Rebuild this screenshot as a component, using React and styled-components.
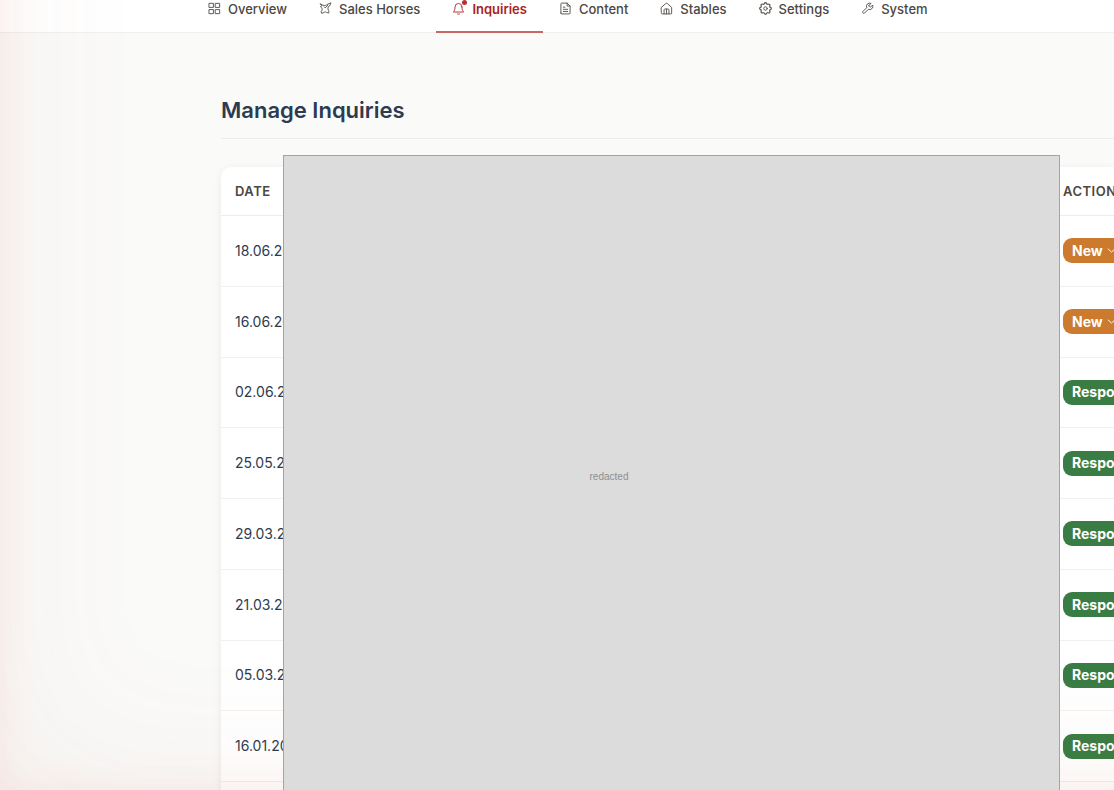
import React from "react";
import styled, { createGlobalStyle } from "styled-components";

const GlobalStyle = createGlobalStyle`
  *, *::before, *::after { box-sizing: border-box; }
  html, body { margin: 0; }
  body {
    background: #fafaf9;
    color: #2d3b4f;
    font-family: Inter, "Liberation Sans", sans-serif;
    overflow: hidden;
  }
`;

const Page = styled.div`
  position: relative;
  height: 100vh;
  overflow: hidden;
`;

const EdgeGlow = styled.div`
  position: absolute;
  inset: -240px -240px 0 0;
  z-index: 1;
  pointer-events: none;
  box-shadow:
    inset 0 0 160px rgba(170, 100, 70, 0.07),
    inset 0 0 40px rgba(235, 60, 40, 0.07);
`;

const TopNav = styled.nav`
  display: flex;
  height: 33px;
  padding-left: 192px;
  background: #fff;
  border-bottom: 1px solid #f2eeec;
`;

const NavLink = styled.a`
  display: flex;
  align-items: center;
  gap: 7px;
  height: 33px;
  padding: 0 16px 14px;
  border-bottom: 2px solid ${(p) => (p.$active ? "#c96762" : "transparent")};
  color: ${(p) => (p.$active ? "#a82222" : "#4b4741")};
  font-size: 13px;
  line-height: 18px;
  font-weight: ${(p) => (p.$active ? 600 : 500)};
  white-space: nowrap;
  text-decoration: none;
`;

const IconSlot = styled.span`
  position: relative;
  display: flex;
  flex: none;
  opacity: 0.9;
`;

const AlertDot = styled.span`
  position: absolute;
  top: -2px;
  right: -2px;
  width: 5px;
  height: 5px;
  border-radius: 50%;
  background: #b01c1c;
`;

const Main = styled.main`
  padding: 61px 0 0 221px;
`;

const Title = styled.h1`
  margin: 0 0 28px;
  padding-bottom: 12px;
  border-bottom: 1px solid #eeedeb;
  font-size: 22px;
  line-height: 32px;
  font-weight: 600;
`;

const Panel = styled.section`
  position: relative;
  padding-bottom: 40px;
  background: #fff;
  border-radius: 10px 0 0 0;
  box-shadow: 0 2px 8px rgba(40, 30, 20, 0.07);
`;

const Table = styled.table`
  width: 100%;
  height: 615px;
  table-layout: fixed;
  border-collapse: separate;
  border-spacing: 0;
`;

const HeadCell = styled.th`
  width: ${(p) => p.$width || "auto"};
  height: 49px;
  padding: 0 0 0 14px;
  border-bottom: 1px solid #eeedeb;
  color: #4b4741;
  font-size: 13px;
  line-height: 18px;
  font-weight: 600;
  letter-spacing: 0.5px;
  text-align: left;
  white-space: nowrap;
`;

const Cell = styled.td`
  padding: 20px 0 20px 14px;
  border-bottom: 1px solid #f3f0ee;
  font-size: 14px;
  line-height: 20px;
  white-space: nowrap;
`;

const StatusPill = styled.label`
  display: inline-flex;
  align-items: center;
  gap: 4px;
  height: 25px;
  padding: 0 9px;
  border-radius: 9px;
  background: ${(p) => (p.$status === "New" ? "#cc7a2d" : "#3a7d44")};
  color: #fff;
  vertical-align: middle;
`;

const StatusSelect = styled.select`
  appearance: none;
  field-sizing: content;
  margin: 0;
  padding: 0;
  border: 0;
  background: transparent;
  color: inherit;
  font-family: inherit;
  font-size: 14px;
  line-height: 20px;
  font-weight: 700;
`;

const Redaction = styled.div`
  position: absolute;
  top: -12px;
  bottom: 0;
  left: 62px;
  right: 54px;
  z-index: 2;
  padding: 314px 125px 0 0;
  border: 1px solid #a3a5a5;
  background: #dcdcdc;
  color: #8e8e8e;
  font-family: "Liberation Sans", Arial, sans-serif;
  font-size: 10px;
  line-height: 14px;
  text-align: center;
`;

const Svg = ({ size = 13, weight = 1.8, children }) => (
  <svg width={size} height={size} viewBox="0 0 24 24" fill="none" stroke="currentColor"
    strokeWidth={weight} strokeLinecap="round" strokeLinejoin="round" aria-hidden="true">
    {children}
  </svg>
);

const icons = {
  Overview: (
    <Svg><path d="M2.500 2.500h7.500v7.500H2.500zM14 2.500h7.500v7.500H14zM2.500 14h7.500v7.500H2.500zM14 14h7.500v7.500H14z" /></Svg>
  ),
  "Sales Horses": (
    <Svg><path d="M2.500 3.500l5 2.500c2 .8 4.500.6 6.500-.5l3-2 5-1.800-1.800 4.800-3.200 2.500c-1 3-.3 5.500 1.500 8l-.8 3.500-3.700-1.200c-1.800-1.400-3.200-1.400-5 0L5 21l-1-3.500c1.800-2 2.400-4 1.300-6.500L2.500 8.500l2.300-1.300zM9.500 9l1.800 1.800L16.500 6" /></Svg>
  ),
  Inquiries: (
    <Svg><path d="M18.300 9a6.300 6.300 0 0 0-12.600 0c0 6-2 8-3.200 9.500h19C20.300 17 18.300 15 18.300 9zM10 22c1 .9 3 .9 4 0" /></Svg>
  ),
  Content: (
    <Svg><path d="M3.500 20.500v-17A1.500 1.500 0 0 1 5 2h10l5.500 5.500v13A1.500 1.500 0 0 1 19 22H5a1.500 1.500 0 0 1-1.500-1.500zM15 2v5.500h5.500M8 9.500h3M8 13.500h8M8 17.500h8" /></Svg>
  ),
  Stables: (
    <Svg><path d="M2.500 10L10.500 2.800a2.200 2.200 0 0 1 3 0L21.500 10v10.500A1.500 1.500 0 0 1 20 22H4a1.500 1.500 0 0 1-1.500-1.500zM7.500 22v-7.500A1.500 1.500 0 0 1 9 13h6a1.500 1.500 0 0 1 1.500 1.500V22M12 13v9" /></Svg>
  ),
  Settings: (
    <Svg><path d="M10.300 4.300c.43-1.760 2.920-1.760 3.350 0a1.720 1.720 0 0 0 2.570 1.070c1.540-.94 3.310.82 2.370 2.370a1.720 1.720 0 0 0 1.070 2.570c1.760.43 1.760 2.920 0 3.350a1.720 1.720 0 0 0-1.070 2.570c.94 1.540-.82 3.310-2.370 2.370a1.720 1.720 0 0 0-2.570 1.070c-.43 1.760-2.920 1.760-3.350 0a1.720 1.720 0 0 0-2.570-1.070c-1.540.94-3.310-.82-2.370-2.370a1.720 1.720 0 0 0-1.070-2.570c-1.760-.43-1.760-2.920 0-3.350a1.720 1.720 0 0 0 1.070-2.570c-.94-1.540.82-3.310 2.370-2.370 1 .61 2.300.07 2.570-1.070z" transform="translate(-2.400 -2.400) scale(1.200)" /><circle cx="12" cy="12" r="3.200" /></Svg>
  ),
  System: (
    <Svg><path d="M14.700 6.300a1 1 0 0 0 0 1.400l1.600 1.600a1 1 0 0 0 1.400 0l3.770-3.770a6 6 0 0 1-7.940 7.940l-6.910 6.910a2.120 2.120 0 0 1-3-3l6.910-6.910a6 6 0 0 1 7.940-7.940l-3.760 3.760z" /></Svg>
  ),
};

const inquiries = [
  { date: "18.06.2025", status: "New" },
  { date: "16.06.2025", status: "New" },
  { date: "02.06.2025", status: "Responded" },
  { date: "25.05.2025", status: "Responded" },
  { date: "29.03.2025", status: "Responded" },
  { date: "21.03.2025", status: "Responded" },
  { date: "05.03.2025", status: "Responded" },
  { date: "16.01.2025", status: "Responded" },
];

export default function App() {
  return (
    <Page>
      <GlobalStyle />
      <TopNav aria-label="Admin">
        {Object.keys(icons).map((name) => (
          <NavLink key={name} href="#" $active={name === "Inquiries"}>
            <IconSlot>
              {icons[name]}
              {name === "Inquiries" && <AlertDot />}
            </IconSlot>
            {name}
          </NavLink>
        ))}
      </TopNav>
      <Main>
        <Title>Manage Inquiries</Title>
        <Panel>
          <Table>
            <thead>
              <tr>
                <HeadCell>DATE</HeadCell>
                <HeadCell $width="65px">ACTION</HeadCell>
              </tr>
            </thead>
            <tbody>
              {inquiries.map(({ date, status }) => (
                <tr key={date}>
                  <Cell>{date}</Cell>
                  <Cell>
                    <StatusPill $status={status}>
                      <StatusSelect aria-label={`Status of inquiry ${date}`} defaultValue={status}>
                        <option>New</option>
                        <option>Responded</option>
                      </StatusSelect>
                      <Svg size={9} weight={2.500}><path d="M3 8l9 8 9-8" /></Svg>
                    </StatusPill>
                  </Cell>
                </tr>
              ))}
            </tbody>
          </Table>
          <Redaction>redacted</Redaction>
        </Panel>
      </Main>
      <EdgeGlow />
    </Page>
  );
}
